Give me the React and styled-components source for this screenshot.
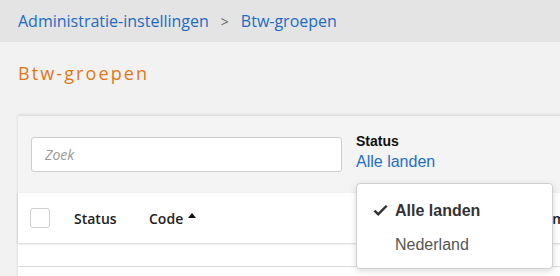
import React from "react";
import styled, { createGlobalStyle } from "styled-components";

const GlobalStyle = createGlobalStyle`
  html, body {
    margin: 0;
    padding: 0;
    background: #f2f2f2;
    overflow: hidden;
    font-family: "Open Sans", sans-serif;
  }
`;

const Page = styled.div`
  width: 560px;
  height: 276px;
  overflow: hidden;
`;

const Breadcrumbs = styled.nav`
  height: 42px;
  background: #e4e4e4;
  display: flex;
  align-items: center;
  padding-left: 18px;
  gap: 12px;
  font-size: 16px;
`;

const Crumb = styled.a`
  color: #1d6bc4;
  text-decoration: none;
`;

const Separator = styled.span`
  color: #666;
  font-size: 14px;
`;

const Title = styled.h1`
  margin: 19px 0 0 18px;
  height: 55px;
  font-size: 18px;
  font-weight: 400;
  letter-spacing: 2.1px;
  color: #e07818;
`;

const Card = styled.section`
  position: relative;
  margin-left: 18px;
  width: 600px;
  height: 200px;
  background: #fff;
  box-shadow: 0 -1px 3px rgba(0, 0, 0, 0.12);
`;

const Filters = styled.div`
  display: flex;
  align-items: flex-start;
  gap: 14px;
  padding: 21px 13px 20px;
  background: #f4f4f4;
`;

const SearchInput = styled.input`
  box-sizing: border-box;
  width: 311px;
  height: 35px;
  border: 1px solid #cdcdcd;
  border-radius: 3px;
  padding: 0 13px;
  font-family: "Open Sans", sans-serif;
  font-size: 14px;
  background: #fff;
  outline: none;

  &::placeholder {
    color: #9a9a9a;
    font-style: italic;
  }
`;

const FilterGroup = styled.div`
  display: flex;
  flex-direction: column;
  margin-top: -6px;
  font-family: "Liberation Sans", Arial, sans-serif;
`;

const FilterLabel = styled.span`
  font-size: 14px;
  font-weight: 700;
  color: #111;
  line-height: 20px;
`;

const FilterValue = styled.a`
  font-size: 16px;
  color: #1d6fc6;
  line-height: 22px;
`;

const HeaderRow = styled.div`
  display: flex;
  align-items: center;
  height: 50px;
  padding-left: 12px;
  background: #fff;
  box-shadow: 0 1px 2px rgba(0, 0, 0, 0.18);
  position: relative;
`;

const Checkbox = styled.span`
  box-sizing: border-box;
  width: 20px;
  height: 20px;
  border: 1px solid #cfcfcf;
  border-radius: 3px;
  background: #fff;
`;

const HeaderCell = styled.span`
  font-size: 14px;
  font-weight: 600;
  color: #222;
  width: ${(p) => p.$width}px;
  margin-left: ${(p) => p.$offset || 0}px;
  display: flex;
  align-items: center;
  gap: 5px;
  white-space: nowrap;
`;

const SortArrow = styled.span`
  width: 0;
  height: 0;
  border-left: 4px solid transparent;
  border-right: 4px solid transparent;
  border-bottom: 5px solid #111;
  margin-top: -5px;
`;

const DataRow = styled.div`
  height: 20px;
  margin-top: 3px;
  border-bottom: 1px solid #dcdcdc;
  background: #fff;
`;

const Dropdown = styled.ul`
  position: absolute;
  left: 338px;
  top: 67px;
  width: 197px;
  height: 86px;
  box-sizing: border-box;
  margin: 0;
  padding: 10px 0 0;
  list-style: none;
  background: #fff;
  border: 1px solid #d0d0d0;
  border-radius: 4px;
  box-shadow: 0 2px 6px rgba(0, 0, 0, 0.15);
  font-family: "Liberation Sans", Arial, sans-serif;
  font-size: 16px;
  z-index: 2;
`;

const Option = styled.li`
  display: flex;
  align-items: center;
  height: 34px;
  padding-left: 16px;
  color: ${(p) => (p.$active ? "#333" : "#555")};
  font-weight: ${(p) => (p.$active ? 700 : 400)};
`;

const CheckSlot = styled.span`
  width: 22px;
  display: flex;
  align-items: center;
`;

const Check = () => (
  <svg width="15" height="12" viewBox="0 0 15 12">
    <path d="M0.6 6.4 L5.2 11 L14.6 1.6 L12.8 0 L5.2 7.6 L2.4 4.7 Z" fill="#333" />
  </svg>
);

export default function App() {
  return (
    <Page>
      <GlobalStyle />
      <Breadcrumbs>
        <Crumb>Administratie-instellingen</Crumb>
        <Separator>&gt;</Separator>
        <Crumb>Btw-groepen</Crumb>
      </Breadcrumbs>
      <Title>Btw-groepen</Title>
      <Card>
        <Filters>
          <SearchInput placeholder="Zoek" />
          <FilterGroup>
            <FilterLabel>Status</FilterLabel>
            <FilterValue>Alle landen</FilterValue>
          </FilterGroup>
        </Filters>
        <HeaderRow>
          <Checkbox />
          <HeaderCell $offset={24} $width={75}>Status</HeaderCell>
          <HeaderCell $width={376}>
            Code <SortArrow />
          </HeaderCell>
          <HeaderCell $width={60}>Naam</HeaderCell>
        </HeaderRow>
        <DataRow />
        <Dropdown>
          <Option $active>
            <CheckSlot>
              <Check />
            </CheckSlot>
            Alle landen
          </Option>
          <Option>
            <CheckSlot />
            Nederland
          </Option>
        </Dropdown>
      </Card>
    </Page>
  );
}
